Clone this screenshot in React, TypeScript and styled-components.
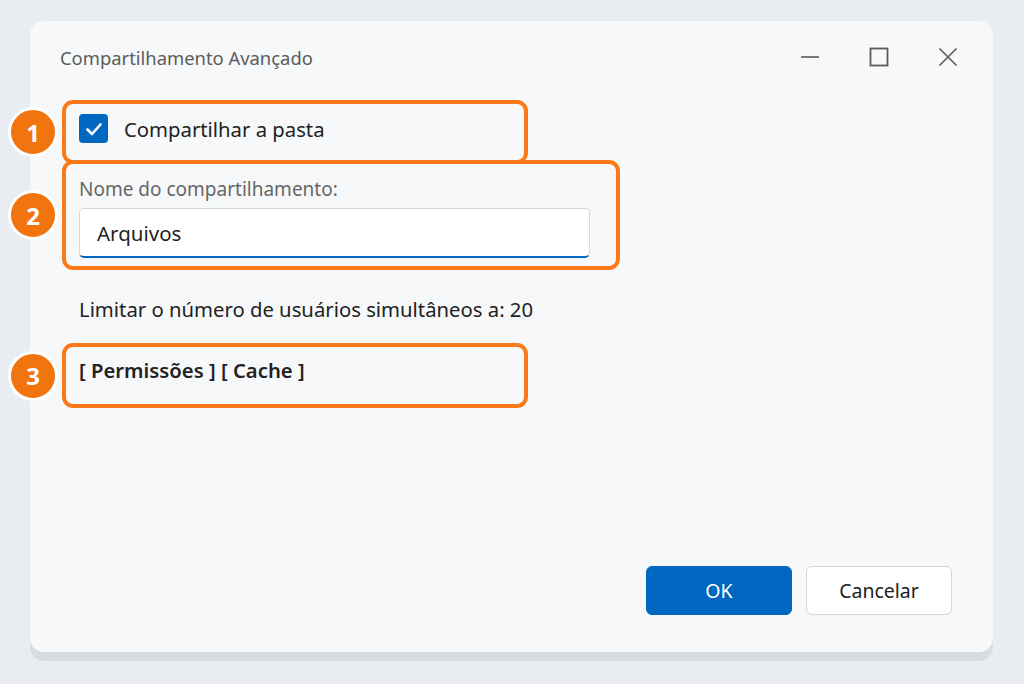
import React from "react";
import styled, { createGlobalStyle } from "styled-components";

const GlobalStyle = createGlobalStyle`
  html, body {
    margin: 0;
    padding: 0;
    background: #e9ecf0;
    font-family: "Noto Sans", "Open Sans", sans-serif;
  }
`;

const Page = styled.div`
  width: 1024px;
  height: 684px;
  box-sizing: border-box;
  padding: 21px 31px 0 30px;
`;

const Window = styled.div`
  width: 963px;
  height: 631px;
  background: #f7f8fa;
  border-radius: 14px;
  box-shadow: 0 9px 0 #d9dce1;
  display: flex;
  flex-direction: column;
  box-sizing: border-box;
`;

const TitleBar = styled.div`
  height: 72px;
  display: flex;
  align-items: center;
  padding: 0 11px 0 30px;
`;

const Title = styled.div`
  flex: 1;
  font-size: 18.4px;
  color: #5c5c5c;
`;

const Controls = styled.div`
  display: flex;
`;

const ControlButton = styled.button`
  width: 69px;
  height: 40px;
  border: none;
  background: transparent;
  display: flex;
  align-items: center;
  justify-content: center;
  padding: 0;
`;

const Content = styled.div`
  flex: 1;
  display: flex;
  flex-direction: column;
  padding: 7px 41px 37px 32px;
`;

const Callout = styled.div<{ $width: number }>`
  position: relative;
  width: ${(p) => p.$width}px;
  box-sizing: border-box;
  border: 4px solid #fb7a17;
  border-radius: 11px;
`;

const Badge = styled.div`
  position: absolute;
  left: -58px;
  top: 50%;
  transform: translateY(-50%);
  width: 44px;
  height: 44px;
  border-radius: 50%;
  background: #f2740f;
  border: 3px solid #ffffff;
  color: #ffffff;
  font-weight: 700;
  font-size: 24px;
  display: flex;
  align-items: center;
  justify-content: center;
`;

const ShareRow = styled(Callout)`
  display: flex;
  align-items: center;
  gap: 16px;
  padding: 10px 13px 17px;
`;

const CheckBox = styled.div`
  width: 29px;
  height: 29px;
  border-radius: 4px;
  background: #0067c0;
  display: flex;
  align-items: center;
  justify-content: center;
`;

const Text = styled.div<{ $bold?: boolean }>`
  font-size: 20.3px;
  line-height: 26px;
  color: #222222;
  font-weight: ${(p) => (p.$bold ? 600 : 400)};
`;

const NameBox = styled(Callout)`
  margin-top: -4px;
  padding: 13px 26px 8px 13px;
  display: flex;
  flex-direction: column;
  gap: 7px;
`;

const Label = styled.div`
  font-size: 19px;
  line-height: 24px;
  color: #666666;
`;

const TextInput = styled.input`
  height: 50px;
  box-sizing: border-box;
  width: 100%;
  background: #ffffff;
  border: 1px solid #d8d8d8;
  border-bottom: 2px solid #0067c0;
  border-radius: 5px;
  padding: 0 17px;
  font-family: "Noto Sans", "Open Sans", sans-serif;
  font-size: 20.5px;
  color: #1f1f1f;
  outline: none;
`;

const LimitLine = styled(Text)`
  margin: 26px 0 21px 17px;
`;

const LinksBox = styled(Callout)`
  padding: 10px 13px 21px;
`;

const Footer = styled.div`
  margin-top: auto;
  display: flex;
  justify-content: flex-end;
  gap: 14px;
`;

const Button = styled.button<{ $primary?: boolean }>`
  width: 146px;
  height: 49px;
  border-radius: 6px;
  font-family: "Noto Sans", "Open Sans", sans-serif;
  font-size: 19.5px;
  background: ${(p) => (p.$primary ? "#0067c0" : "#ffffff")};
  color: ${(p) => (p.$primary ? "#ffffff" : "#222222")};
  border: 1px solid ${(p) => (p.$primary ? "#0067c0" : "#d6d6d6")};
`;

const iconStroke = { stroke: "#5a5a5a", strokeWidth: 1.6, fill: "none" };

const App = () => {
  return (
    <>
      <GlobalStyle />
      <Page>
        <Window>
          <TitleBar>
            <Title>Compartilhamento Avançado</Title>
            <Controls>
              <ControlButton aria-label="Minimizar">
                <svg width="20" height="20" viewBox="0 0 20 20">
                  <line x1="1" y1="10" x2="19" y2="10" {...iconStroke} />
                </svg>
              </ControlButton>
              <ControlButton aria-label="Maximizar">
                <svg width="20" height="20" viewBox="0 0 20 20">
                  <rect x="1.5" y="1.5" width="17" height="17" {...iconStroke} strokeWidth={1.8} />
                </svg>
              </ControlButton>
              <ControlButton aria-label="Fechar">
                <svg width="20" height="20" viewBox="0 0 20 20">
                  <path d="M1.5 1.5 L18.5 18.5 M18.5 1.5 L1.5 18.5" {...iconStroke} />
                </svg>
              </ControlButton>
            </Controls>
          </TitleBar>
          <Content>
            <ShareRow $width={466}>
              <Badge>1</Badge>
              <CheckBox>
                <svg width="20" height="20" viewBox="0 0 20 20">
                  <path d="M3.5 10.5 L8 15 L16.5 5.5" stroke="#ffffff" strokeWidth={2.6} fill="none" strokeLinecap="round" strokeLinejoin="round" />
                </svg>
              </CheckBox>
              <Text>Compartilhar a pasta</Text>
            </ShareRow>
            <NameBox $width={558}>
              <Badge>2</Badge>
              <Label>Nome do compartilhamento:</Label>
              <TextInput defaultValue="Arquivos" readOnly />
            </NameBox>
            <LimitLine>Limitar o número de usuários simultâneos a: 20</LimitLine>
            <LinksBox $width={466}>
              <Badge>3</Badge>
              <Text $bold>[ Permissões ] [ Cache ]</Text>
            </LinksBox>
            <Footer>
              <Button $primary>OK</Button>
              <Button>Cancelar</Button>
            </Footer>
          </Content>
        </Window>
      </Page>
    </>
  );
};

export default App;
